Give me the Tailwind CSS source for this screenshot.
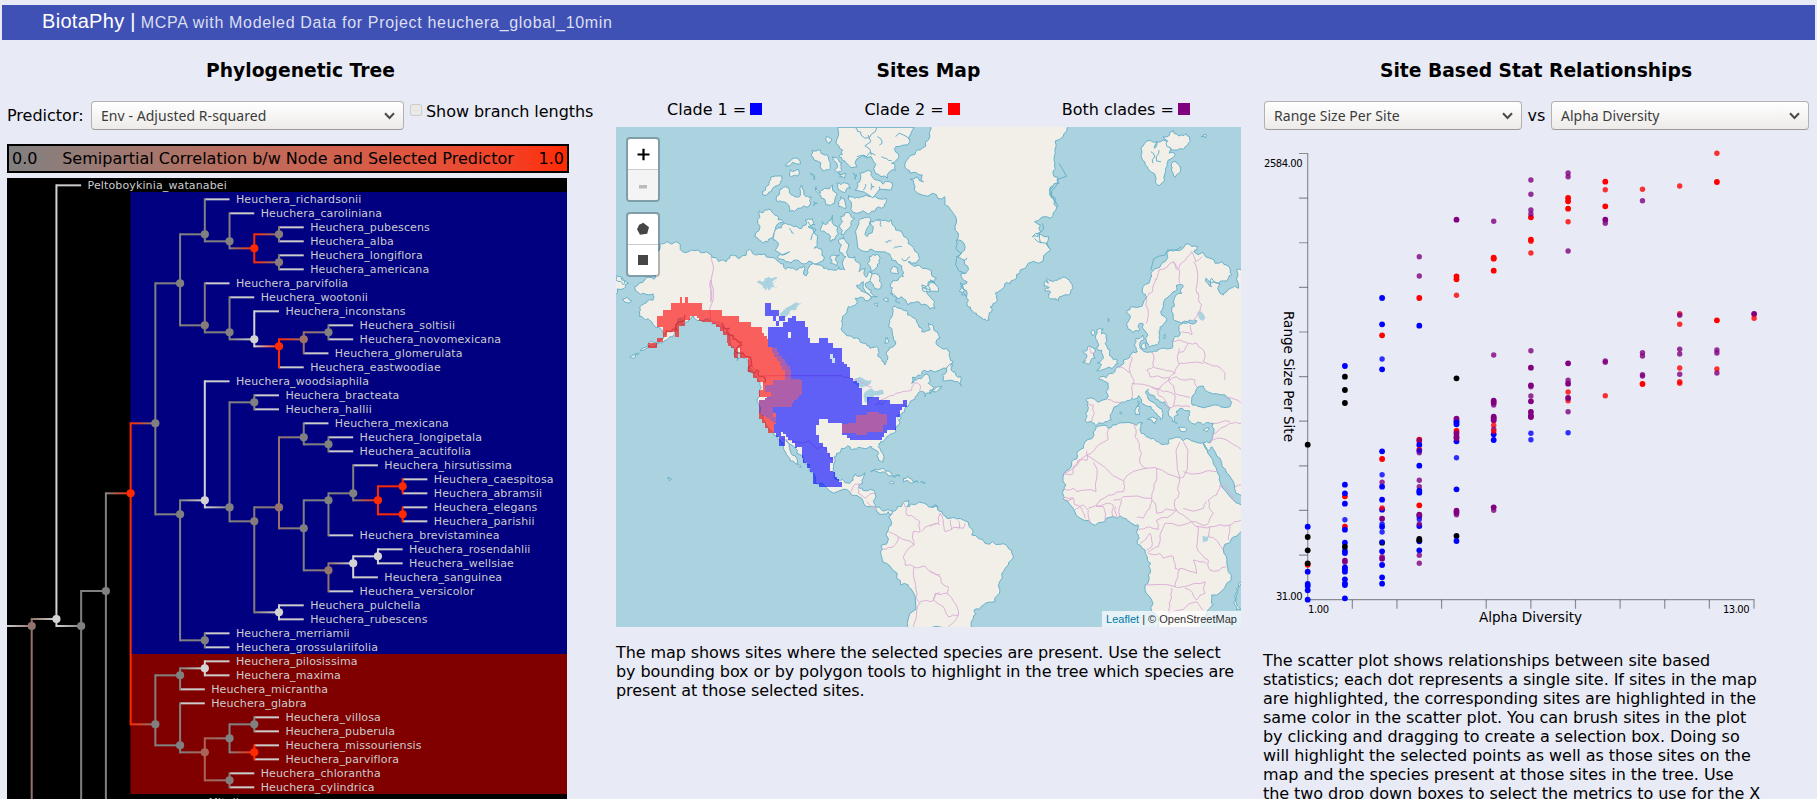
<!DOCTYPE html>
<html lang="en">
<head>
<meta charset="utf-8">
<title>BiotaPhy</title>
<script src="https://cdn.jsdelivr.net/npm/@tailwindcss/browser@4"></script>
</head>
<body class="h-[799px] w-[1817px] overflow-hidden bg-[#e8eaf6] pt-[5px] font-['DejaVu_Sans',sans-serif] text-[16px] leading-[19px] text-black">
<header class="mx-[2px] flex h-[35px] items-center whitespace-nowrap bg-[#3f51b5] pl-[40px] font-['Liberation_Sans',sans-serif]">
  <span class="text-[20px] leading-[24px] tracking-[0.3px] text-white -mt-[3px]">BiotaPhy |</span>
  <span class="ml-[5px] text-[16px] leading-[24px] tracking-[0.68px] text-[#dcdff0]">MCPA with Modeled Data for Project heuchera_global_10min</span>
</header>
<main class="flex h-[759px] items-start">
  <section class="w-[600px] pl-[7px]">
    <h3 class="mr-[-1px] pt-[20px] pr-[7px] text-center text-[18.72px] font-bold leading-[22px]">Phylogenetic Tree</h3>
    <div class="mt-[19px] flex h-[29px] items-start whitespace-nowrap">
      <span class="w-[84px] pt-[5px]">Predictor:</span>
      <div class="flex h-[29px] w-[313px] items-center justify-between rounded-[4px] border border-[#b4b2ae] border-b-[#9d9a95] bg-linear-to-b from-white to-[#edebe9] pr-[8px] pl-[9px] text-[14px] text-[#3c3c3c] font-['Noto_Sans',sans-serif]">
        <span class="tracking-[0.05px]">Env - Adjusted R-squared</span>
        <svg width="11" height="8" viewBox="0 0 11 8" fill="none" stroke="#4a4a4a" stroke-width="2"><path d="M1 1.2 5.5 6 10 1.2"/></svg>
      </div>
      <span class="ml-[6px] mt-[3px] h-[12px] w-[12px] rounded-[2px] border border-[#d0cecb] bg-[#ebe9e8]"></span>
      <span class="ml-[4px] mt-[1px] tracking-[-0.05px]">Show branch lengths</span>
    </div>
    <div class="mt-[14px] flex h-[29px] w-[562px] items-center justify-between whitespace-nowrap border-2 border-black bg-linear-to-r from-[#808080] to-[#ff2a00] px-[3px]">
      <span>0.0</span><span>Semipartial Correlation b/w Node and Selected Predictor</span><span>1.0</span>
    </div>
    <svg id="tree" class="mt-[5px] block" width="560" height="621" viewBox="7 178 560 621"></svg>
  </section>
  <section class="ml-[16px] w-[625px]">
    <h3 class="pt-[20px] text-center text-[18.72px] font-bold leading-[22px]">Sites Map</h3>
    <div class="mt-[18px] flex h-[27px] justify-around whitespace-nowrap">
      <span class="flex items-start">Clade 1 =<i class="mt-[3px] ml-[4px] h-[12px] w-[12px] bg-[#0000ff]"></i></span>
      <span class="flex items-start">Clade 2 =<i class="mt-[3px] ml-[4px] h-[12px] w-[12px] bg-[#ff0000]"></i></span>
      <span class="flex items-start">Both clades =<i class="mt-[3px] ml-[4px] h-[12px] w-[12px] bg-[#800080]"></i></span>
    </div>
    <div class="relative h-[500px] w-[625px] overflow-hidden bg-[#aad3df]">
      <svg id="map" class="block" width="625" height="500" viewBox="616 127 625 500"></svg>
      <div class="absolute top-[10px] left-[10px] flex h-[65px] w-[34px] flex-col overflow-hidden rounded-[4px] border-2 border-black/25 bg-white bg-clip-padding">
        <div class="flex h-[31px] items-center justify-center border-b border-[#ccc]"><svg width="13" height="13" viewBox="0 0 13 13" stroke="#000" stroke-width="2.2"><path d="M6.5 .8v11.4M.5 6.5h12"/></svg></div>
        <div class="flex grow items-center justify-center bg-[#f4f4f4] pt-[4px]"><svg width="8" height="4"><path fill="#bbb" d="M0 0h8v3.6H0z"/></svg></div>
      </div>
      <div class="absolute top-[85px] left-[10px] flex h-[65px] w-[34px] flex-col overflow-hidden rounded-[4px] border-2 border-black/25 bg-white bg-clip-padding">
        <div class="flex h-[31px] items-center justify-center border-b border-[#ccc]"><svg width="14" height="14" viewBox="0 0 14 14" fill="#464646"><path d="M7.3 .8 13 5.2 11.2 11.7 4 12.8 1 7.2 3.2 2.8z"/></svg></div>
        <div class="flex grow items-center justify-center"><span class="h-[10px] w-[10px] bg-[#464646]"></span></div>
      </div>
      <div class="absolute right-0 bottom-0 flex h-[16px] w-[139px] items-center justify-center whitespace-pre bg-white/70 font-['Liberation_Sans',sans-serif] text-[11px] text-[#333]"><span class="text-[#0078a8]">Leaflet</span> | © OpenStreetMap</div>
    </div>
    <p class="mt-[16px] whitespace-nowrap tracking-[-0.09px]">The map shows sites where the selected species are present. Use the select<br>by bounding box or by polygon tools to highlight in the tree which species are<br>present at those selected sites.</p>
  </section>
  <section class="ml-[22px] w-[546px]">
    <h3 class="pt-[20px] text-center text-[18.72px] font-bold leading-[22px]">Site Based Stat Relationships</h3>
    <div class="mt-[19px] flex h-[29px] items-center justify-between whitespace-nowrap pl-[1px]">
      <div class="flex h-[29px] w-[258px] items-center justify-between rounded-[4px] border border-[#b4b2ae] border-b-[#9d9a95] bg-linear-to-b from-white to-[#edebe9] pr-[8px] pl-[9px] text-[14px] text-[#3c3c3c] font-['Noto_Sans',sans-serif]">
        <span class="tracking-[0.05px]">Range Size Per Site</span>
        <svg width="11" height="8" viewBox="0 0 11 8" fill="none" stroke="#4a4a4a" stroke-width="2"><path d="M1 1.2 5.5 6 10 1.2"/></svg>
      </div>
      <span>vs</span>
      <div class="flex h-[29px] w-[258px] items-center justify-between rounded-[4px] border border-[#b4b2ae] border-b-[#9d9a95] bg-linear-to-b from-white to-[#edebe9] pr-[8px] pl-[9px] text-[14px] text-[#3c3c3c] font-['Noto_Sans',sans-serif]">
        <span>Alpha Diversity</span>
        <svg width="11" height="8" viewBox="0 0 11 8" fill="none" stroke="#4a4a4a" stroke-width="2"><path d="M1 1.2 5.5 6 10 1.2"/></svg>
      </div>
    </div>
    <svg id="plot" class="block" width="546" height="500" viewBox="1263 130 546 500"></svg>
    <p class="mt-[21px] whitespace-nowrap tracking-[-0.06px]">The scatter plot shows relationships between site based<br>statistics; each dot represents a single site. If sites in the map<br>are highlighted, the corresponding sites are highlighted in the<br>same color in the scatter plot. You can brush sites in the plot<br>by clicking and dragging to create a selection box. Doing so<br>will highlight the selected points as well as those sites on the<br>map and the species present at those sites in the tree. Use<br>the two drop down boxes to select the metrics to use for the X</p>
  </section>
</main>
<script>
/* ---------- phylogenetic tree ---------- */
(function () {
  const g = '#808080', h = '#857b7b', w = '#d3d3d3', r = '#ff2a00', b = '#93736e';
  const H = 'Heuchera_';
  const blue = [g,
    [g,
      [g, 'richardsonii', [g, 'caroliniana', [r, [h, 'pubescens', 'alba'], [h, 'longiflora', 'americana']]]],
      [h, 'parvifolia', [g, 'wootonii', [w, 'inconstans', [r, ['#9d7068', [g, 'soltisii', 'novomexicana'], 'glomerulata'], 'eastwoodiae']]]]],
    [g,
      [w, 'woodsiaphila', [g, [g, 'bracteata', 'hallii'],
        [h, [b, [g, 'mexicana', [g, 'longipetala', 'acutifolia']],
          [g, [g, [g, 'hirsutissima', [r, [r, 'caespitosa', 'abramsii'], [r, 'elegans', 'parishii']]], 'brevistaminea'],
            [b, [w, [w, 'rosendahlii', 'wellsiae'], 'sanguinea'], 'versicolor']]],
          [w, 'pulchella', 'rubescens']]]],
      [g, 'merriamii', 'grossulariifolia']]];
  const red = [g,
    [g, [w, 'pilosissima', 'maxima'], 'micrantha'],
    [g, 'glabra', ['#aa6358', [g, [g, 'villosa', 'puberula'], [r, 'missouriensis', 'parviflora']], [h, 'chlorantha', 'cylindrica']]]];
  const X0 = 31.7, DX = 24.73;
  let leaf = 1, lines = '', dots = '', texts = '', defs = '', gid = 0;
  const X = d => X0 + d * DX, Y = i => 185.33 + i * 14;
  function hline(x1, x2, y, c1, c2) {
    let fill = c1;
    if (c1 !== c2) { const id = 'g' + gid++; defs += `<linearGradient id="${id}"><stop stop-color="${c1}"/><stop offset="1" stop-color="${c2}"/></linearGradient>`; fill = `url(#${id})`; }
    lines += `<rect x="${x1}" y="${y - 1}" width="${x2 - x1}" height="2" fill="${fill}"/>`;
  }
  function vline(x, y1, y2, c) { lines += `<rect x="${x - 1}" y="${Math.min(y1, y2) - 1}" width="2" height="${Math.abs(y2 - y1) + 2}" fill="${c}"/>`; }
  function dot(x, y, c) { dots += `<circle cx="${x}" cy="${y}" r="4.1" fill="${c}"/>`; }
  function label(x, y, t) { texts += `<text x="${x + 6.4}" y="${y + 3.6}">${t}</text>`; }
  function walk(n, d) {
    if (typeof n === 'string') { const y = Y(leaf++); label(X(d), y, H + n); return { y, a: y, z: y, c: '#cccccc', leaf: 1 }; }
    const k = [walk(n[1], d + 1), walk(n[2], d + 1)];
    const a = k[0].a, z = k[1].z, y = (a + z) / 2;
    k.forEach(q => hline(X(d), X(d + 1), q.y, q.leaf ? '#cccccc' : n[0], q.c));
    vline(X(d), k[0].y, k[1].y, n[0]);
    dot(X(d), y, n[0]);
    return { y, a, z, c: n[0] };
  }
  const B = walk(blue, 5), R = walk(red, 5), ry = (B.a + R.z) / 2;
  hline(X(4), X(5), B.y, r, g); hline(X(4), X(5), R.y, r, g); vline(X(4), B.y, R.y, r); dot(X(4), ry, r);
  hline(X(3), X(4), ry, g, r); vline(X(3), ry, 820, g); dot(X(3), 591, g);
  hline(X(2), X(3), 591, g, g); vline(X(2), 591, 820, g); dot(X(2), 626, g);
  hline(X(1), X(2), 626, w, g); vline(X(1), 185.33, 626, w); dot(X(1), 619, w);
  hline(X(1), X(2), 185.33, '#ccc', '#ccc'); label(X(2), 185.33, 'Peltoboykinia_watanabei');
  hline(X(0), X(1), 619, b, w); vline(X(0), 619, 820, b); dot(X(0), 626, b);
  hline(7, X(0), 626, '#cccccc', b);
  label(202, 802.6, 'Mitella');
  document.getElementById('tree').innerHTML = `<defs>${defs}</defs><path d="M7 178h560v621H7z"/><path fill="navy" d="M130.4 192H567v462H130.4z"/><path fill="maroon" d="M130.4 654H567v140H130.4z"/>${lines}${dots}<g fill="#ccc" font-size="11" letter-spacing=".13" font-family="DejaVu Sans">${texts}</g>`;
})();

/* ---------- sites map ---------- */
(function () {
  const frames = { A: [610, 40, 2.45, 3], B: [610, 280, 3, 3], C: [930, 280, 3, 3] };
  let seed = 7; const rnd = () => (seed = (seed * 16807) % 2147483647) / 2147483647;
  function pts(s) {
    let f = frames.B; const out = [];
    s.trim().split(/\s+/).forEach(t => {
      if (frames[t]) { f = frames[t]; return; }
      const [x, y] = t.split(',').map(Number); out.push([x / f[2] + f[0], y / f[3] + f[1]]);
    });
    return out;
  }
  function rough(p, k, close) {
    for (let n = 0; n < 2; n++) {
      const o = [];
      p.forEach((a, i) => {
        o.push(a); if (!close && i === p.length - 1) return;
        const c = p[(i + 1) % p.length], dx = c[0] - a[0], dy = c[1] - a[1], L = Math.hypot(dx, dy);
        if (L > 2 && L < 60) { const j = (rnd() - .5) * k; o.push([(a[0] + c[0]) / 2 - dy * j, (a[1] + c[1]) / 2 + dx * j]); }
      });
      p = o;
    }
    return p;
  }
  const path = (p, close) => 'M' + p.map(q => q[0].toFixed(1) + ' ' + q[1].toFixed(1)).join('L') + (close ? 'Z' : '');
  const land = [
    `A 140,605 172,628 200,630 230,638 250,652 285,665 300,645 318,655 342,628 360,645 380,642 405,655 425,672 430,688 455,690 475,678 480,708 486,685 515,675 535,690 555,690 560,680 575,690 578,650 562,630 560,600 572,590 585,612 582,645 600,650 612,670 610,695 625,685 628,712 640,690 635,650 655,642 662,655 655,680 640,720 625,735 640,750 655,770 B 760,5 740,15 760,35 775,40 785,55 765,62 735,55 740,72 715,80 703,105 697,130 705,160 730,175 760,190 780,205 805,205 805,230 815,238 825,255 832,240 830,215 850,200 850,170 845,150 835,140 838,120 848,100 850,80 870,85 890,92 905,110 920,120 925,135 935,155 960,150 955,130 970,140 990,175 C 20,180 35,205 60,215 70,245 55,265 0,270 B 940,272 925,285 905,310 925,295 950,282 955,310 970,322 990,325 C 10,325 0,340 B 960,335 945,350 938,335 920,348 915,358 900,370 885,385 875,400 865,420 857,445 850,460 830,470 812,485 805,500 822,530 820,545 805,535 795,510 785,500 760,505 740,508 720,500 695,505 680,520 675,545 672,575 685,600 705,608 730,600 735,582 765,578 758,610 745,622 765,632 795,635 792,660 795,680 815,690 835,688 848,692 848,710 835,695 820,703 800,695 780,680 755,655 725,645 695,630 650,624 615,610 600,575 580,545 560,520 545,495 527,480 540,510 560,535 573,562 555,550 535,530 520,500 510,480 490,458 465,425 450,400 445,370 448,340 450,305 440,290 430,275 415,250 400,235 375,220 360,185 340,155 320,135 300,122 270,120 250,108 235,125 215,135 215,115 200,130 195,160 175,175 150,188 115,200 90,212 140,190 162,165 155,150 135,140 125,125 100,115 88,95 95,75 110,65 130,60 130,42 100,40 75,30 A 60,740 85,720 108,718 110,700 100,690 110,640 122,612`,
    `A 10,710 30,712 45,730 35,745 10,765`,
    `B 18,0 40,15 45,5 30,-12 18,-12`,
    `A 365,512 385,510 400,520 412,540 425,548 405,575 395,595 375,610 355,590 362,550`,
    `A 405,570 430,550 450,560 470,565 478,540 495,535 502,555 485,560 500,580 500,625 520,635 525,655 500,672 475,672 455,660 430,665 410,650 440,635 405,632 412,615 400,600`,
    `A 520,545 533,550 545,525 558,560 550,600 540,605 530,580 515,570`,
    `A 565,530 590,525 600,535 585,565 568,585 562,560`,
    `A 610,550 620,535 637,533 632,560 630,590 645,560 640,545 660,538 690,540 700,570 720,590 730,610 755,640 750,670 730,665 765,685 800,715 795,730 780,725 785,755 765,745 B 975,10 960,0 985,35 960,30 935,15 960,50 975,85 950,75 920,65 895,75 875,50 845,35 840,15 865,0 880,-10 A 715,690 690,660 680,640 650,635 625,635 605,600`,
    `A 585,465 600,475 620,470 650,470 677,475 672,500 650,513 620,512 590,508`,
    `A 558,262 555,300 570,330 560,350 580,370 605,380 620,345 640,350 650,400 680,415 700,390 690,370 708,350 700,320 735,305 745,262`,
    `A 612,400 640,395 645,415 655,420 685,425 688,450 600,450 605,430`,
    `A 430,440 445,465 462,472 464,445 470,435 480,470 493,470 490,495 460,505 440,515 425,485 410,485 415,455`,
    `A 505,440 515,460 525,445 545,435 550,490 530,495 518,475`,
    `A 373,455 390,425 405,408 422,408 418,430 395,455 380,468`,
    `A 495,330 515,330 525,345 538,365 540,385 520,390 500,360`,
    `A 545,350 560,360 567,380 565,395 550,390`, `A 555,430 575,428 590,445 575,458 560,450`, `A 565,470 575,480 578,505 560,500`,
    `A 440,365 460,355 467,372 430,378`, `A 442,390 462,388 460,408 445,410`, `A 490,398 500,405 500,420`, `A 530,290 542,295 538,310`, `A 560,398 578,400 575,415 563,412`, `A 595,400 605,405 600,418`, `A 500,485 508,490 500,497`, `A 540,650 562,645 555,678 540,670`, `A 692,682 705,685 705,702 692,700`,
    `B 780,-25 810,-5 812,25 795,28 785,10`, `B 820,60 835,55 835,65`, `B 792,72 803,70 803,80`, `B 825,175 832,172 832,190 824,190`,
    `A 785,255 780,300 760,330 740,345 722,375 735,400 765,405 768,425 735,418 745,450 790,460 820,470 835,510 845,560 850,600 870,620 848,650 875,655 878,690 860,700 875,725 860,740 873,770 C 90,8 105,30 95,45 115,60 110,70 130,95 145,108 160,118 178,120 185,95 190,70 200,55 195,40 225,10 250,0 A 990,720 1005,690 1050,670 1080,630 1075,590 1035,590 1055,575 1040,545 1080,535 1095,500 1080,470 1080,440 1100,430 1085,400 1090,370 1090,330 1110,290 1125,255`,
    `A 1310,310 1340,305 1335,325 1355,300 1370,340 1385,345 1365,370 1360,400 1345,438 1325,395 1310,365 1303,340`,
    `A 1355,290 1380,272 1400,285 1420,290 1415,315 1390,330 1365,320`, `A 1380,365 1398,385 1385,412 1375,390`, `A 1448,290 1462,285 1460,293`,
    `C 344,5 355,10 352,-5 370,5 385,-3 410,-5 420,5 430,25 415,45 385,62 355,50 362,38 345,32 358,22 342,18`,
    `A 1410,612 1440,620 1430,635 1470,655 1500,665 1520,690 1515,715 1490,730 1460,715 1475,740 C 845,-5 870,40 880,45 895,30 A 1520,745 1540,745 1535,690 1560,680 C 950,670 918,640 950,672 933,755 905,775 882,820 893,860 890,910 845,945 850,975 830,1000 820,1055 690,1055 675,1000 665,960 645,915 655,885 662,850 645,810 622,780 625,765 625,735 605,732 585,715 560,715 525,725 485,732 460,720 430,685 402,660 400,645 408,615 400,585 425,545 440,520 460,505 465,485 490,455 497,442 535,445 565,430 600,428 638,428 630,450 645,465 670,475 690,490 715,492 718,475 735,472 760,482 795,485 820,488 840,488 848,465 850,430 820,435 785,430 775,410 778,392 750,385 740,393 745,405 732,412 742,430 728,425 715,400 712,378 690,365 665,345 655,328 648,340 665,365 690,385 700,400 690,418 682,405 670,390 650,378 635,360 625,347 605,355 590,362 570,370 545,400 545,420 520,430 497,437 485,425 468,425 465,400 472,375 468,358 480,353 530,357 535,350 535,320 525,305 507,298 512,290 540,280 560,262 580,240 600,225 622,215 615,190 618,175 638,165 640,180 630,200 640,213 660,215 680,215 700,205 725,205 728,190 735,170 750,165 748,145 755,132 780,130 800,122 780,120 745,125 730,110 725,90 730,65 755,40 760,20 740,15 730,35 700,70 695,105 708,125 690,150 690,180 675,195 658,200 650,185 642,150 638,130 625,155 605,155 590,135 600,115 590,95 605,80 650,50 638,40 A 1305,760 1320,730 1325,700 1340,685 1360,665 1385,630`,
    `C 500,150 520,147 515,162 530,165 525,190 540,210 545,230 562,240 555,258 535,262 500,272 515,255 502,248 520,235 515,210 500,205 505,190 497,175`,
    `C 458,215 470,212 480,198 495,205 495,235 480,250 458,247 468,235`,
    `C 488,150 494,155 488,168`, `C 624,362 628,372 622,380`, `C 618,383 630,382 628,405 618,405`, `C 652,418 682,416 676,430`, `C 745,443 770,447 770,450 750,449`, `C 820,450 838,444 832,455`, `C 640,190 650,188 650,205 635,205`, `C 704,162 708,170 700,175`, `C 568,398 576,397 574,403`, `C 532,115 537,118 534,126`,
    `C 940,900 920,925 920,945 912,965 920,990 940,995`,
    `B 848,692 862,680 880,668 895,660 890,680 905,672 935,668 955,680 985,682 C 5,680 22,678 35,695 60,715 100,720 118,740 125,765 165,790 210,793 245,812 250,830 235,855 215,880 210,930 195,965 160,975 132,990 130,1015 105,1060 B 890,1060 900,1000 905,930 895,915 860,895 830,850 812,820 815,795 835,750 845,730`,
    `B 782,575 795,567 820,565 840,575 870,588 855,592 820,575`, `B 880,595 905,597 925,606 905,610 880,606`, `B 838,608 852,607 850,612`, `B 932,606 945,607 944,611`, `B 172,594 180,592 185,598 178,602`,
    `C 38,302 50,275 66,250 68,275 92,290 95,318 75,305`, `C 0,330 15,325 35,318 25,330 0,342`, `B 112,195 140,188 140,200`, `B 60,232 75,222 88,220 70,235`, `B 38,57 65,62 60,68 42,64`, `B 372,218 382,242 388,235`
  ];
  const water = [
    `C 787,375 790,345 805,320 820,318 832,335 850,342 885,345 905,368 900,380 880,382 850,375 810,380`,
    `C 820,488 836,512 845,500 870,535 890,580 912,610 918,640 945,655 945,680 910,660 870,605 862,575 840,528`
  ];
  const fjords = [
    `A 600,262 615,285 650,275 685,262`, `A 632,285 640,345`, `A 655,290 660,315`, `A 605,350 650,345`, `A 735,300 700,290`, `A 690,362 665,350`,
    `A 640,430 640,450`, `A 625,432 620,450`, `A 660,440 660,450`, `A 655,540 665,560`, `A 690,600 675,605`, `A 715,620 695,625`, `A 735,650 715,655`,
    `A 485,545 492,600`, `A 440,565 450,580`, `A 848,600 862,640 870,700`, `A 1100,370 1092,440 1098,500`, `A 1040,595 1075,625`, `A 1060,550 1055,610`, `A 1085,440 1090,490`,
    `A 1325,690 1360,645 1400,620`, `A 1330,370 1325,335`, `A 1345,330 1350,365`, `B 840,40 870,70`
  ];
  const lakes = [
    `C 816,770 840,765 835,780 820,790`, `C 803,96 815,95 826,110 818,123 805,112`,
    `A 358,730 375,725 388,710 410,712 398,725 410,745 395,740 390,752 383,738 370,750 376,738`, `B 510,100 525,88 545,75 575,70 558,90 540,92 530,108 512,108`, `B 440,4 470,10 500,2 480,15 468,32 460,18`,
    `B 728,308 750,290 785,300 780,312 745,318`, `B 763,365 765,335 785,325 820,330 822,342 795,345 778,355 772,368`, `B 797,373 835,358 820,368`,
    `B 860,408 868,400 864,420`
  ];
  const borders = [
    `A 247,650 247,785 B 302,0 302,118 330,130 360,165 390,195 420,245 440,285`, `B 460,287 695,287 720,295 760,310 785,320`, `B 795,375 835,350 865,338 890,335 905,330 915,308 930,315 930,335`,
    `B 512,475 555,487 597,482 622,508 640,500 660,535 675,540`, `B 720,640 735,612 748,610 745,640 765,655 795,640`, `B 770,665 800,690`,
    `B 882,670 890,705 915,715 930,725 930,755 910,755 912,795 865,770 835,755`, `B 935,755 960,735 990,735`, `B 865,770 850,800 820,808`, `B 912,795 880,830 885,855 910,860 945,858 990,885`, `B 912,860 918,930 930,970 920,990 910,1045`, `B 930,965 970,962 980,940 990,937`,
    `C 0,740 25,730 30,700`, `C 30,700 40,720 45,755 100,745 105,730`, `C 60,720 65,750`, `C 85,722 85,748`, `C 0,875 30,890 35,910 55,920 50,940 15,940 10,960 40,980 55,1010 85,1005 75,970 50,940`, `C 85,1005 55,1040`,
    `C 678,-5 668,35 650,50 655,100 648,130`, `C 678,0 A 1345,690 1380,665 1390,690 1410,660 1425,635 1435,665 1450,650`, `A 1380,665 1395,690 1395,730`, `A 1430,665 1440,710 1438,760 C 805,40 815,75 800,110 790,125`,
    `C 472,372 490,375 485,425`, `C 532,358 575,368`, `C 565,262 600,278 612,305 605,330 605,355`, `C 605,230 600,255 600,278`, `C 665,215 670,260 650,270 660,290 690,290 720,295`, `C 670,260 700,268 735,280 748,255 748,205`, `C 605,310 625,312 660,318 690,325 715,300 740,290 760,300 795,300 800,320`, `C 728,185 760,185 775,190 760,215 745,220`, `C 755,155 785,165 780,135`, `C 775,190 800,190 825,225 820,245 850,258 885,278 885,300`, `C 748,250 820,250`, `C 735,280 715,300 735,340 780,352`, `C 680,328 685,345 705,360 715,385 735,378 780,380`, `C 665,320 700,335 715,335 735,345 730,378`, `C 480,200 482,218 495,218`,
    `C 535,445 535,478 500,500 470,525 402,582`, `C 470,512 472,540 445,540 430,580 402,582`, `C 470,525 580,602 650,565 680,565 750,595 750,485`, `C 760,485 760,592 748,595 748,640 735,660 740,690`, `C 760,575 860,575`, `C 612,430 615,470 628,490 630,550 650,565`, `C 490,547 498,635 440,635 430,625 402,628`, `C 583,602 580,635 545,645 510,660 500,680`, `C 402,652 428,652`, `C 402,660 430,655 435,675 460,675 475,690 480,730`, `C 435,690 450,680 465,715`, `C 475,685 520,680 525,725`, `C 500,680 525,672 550,675 550,715`, `C 557,680 560,712`, `C 550,660 580,650 665,655 680,600 680,565`, `C 575,660 570,710`, `C 665,655 660,685 640,715 620,712`, `C 665,660 680,700 740,690 760,705 785,725 830,735 850,700 835,660 860,645`, `C 760,685 820,685 830,665`, `C 625,748 685,748 680,720 740,690`, `C 630,790 660,760 665,800 650,810`, `C 655,815 685,800 705,730 785,725 805,740 800,800 835,840 840,870 890,860`, `C 652,818 690,820 700,835 730,830 735,865 750,870`, `C 750,865 735,920 648,915`, `C 750,865 800,880 790,840 830,850`, `C 735,920 765,920 825,905 825,940 800,960 765,925`, `C 725,925 722,960 715,1000`, `C 715,1000 800,965 820,990`, `C 800,740 840,740 835,770 880,810`, `C 840,740 900,735 895,780`, `C 900,735 933,720`, `C 860,645 870,615 905,645 915,665`, `C 840,490 848,465 900,430 933,430`, `C 850,480 890,480 933,508`, `C 890,355 933,370`, `C 850,430 900,425`, `C 915,620 933,615`
  ];
  /* staircase outline for gridded site cells */
  function stairs(s) {
    const q = pts(s), u = 2.85, o = [];
    q.forEach((a, i) => {
      const c = q[(i + 1) % q.length], dx = c[0] - a[0], dy = c[1] - a[1];
      const n = Math.max(1, Math.round(Math.min(Math.abs(dx), Math.abs(dy)) / u));
      for (let k = 0; k < n; k++) {
        const x = a[0] + dx * k / n, y = a[1] + dy * k / n;
        o.push([Math.round(x), Math.round(y)], [Math.round(a[0] + dx * (k + 1) / n), Math.round(y)]);
      }
    });
    return path(o, true);
  }
  const red = [`183,70 210,70 210,52 216,52 216,70 225,70 225,52 233,52 233,70 275,70 275,90 335,90 335,108 387,108 387,125 423,125 423,142 445,142 455,160 470,178 475,200 485,207 510,250 525,270 540,290 540,300 520,330 490,350 448,360 448,330 460,305 440,295 430,275 415,265 413,235 400,235 390,205 385,235 373,230 373,205 355,190 350,165 330,140 305,125 275,122 260,108 240,108 240,120 225,125 225,138 208,140 208,172 193,172 195,155 180,155 172,172 160,170 160,142 142,140 142,108 160,105 160,90 183,88`,
    `115,190 140,190 140,203 115,203`, `142,175 158,175 158,187 142,187`, `447,390 490,400 497,432 492,458 484,458 465,430 447,405`];
  const blue = [`475,142 518,142 518,125 535,122 535,115 545,108 557,108 557,122 584,122 584,140 593,142 593,175 600,188 627,188 627,175 653,175 653,188 670,188 670,203 685,205 695,220 695,245 710,260 720,275 720,295 740,310 755,340 757,375 772,370 772,350 806,350 806,360 840,360 840,372 878,372 878,360 890,360 890,382 875,390 870,410 858,420 857,450 830,460 815,480 730,480 712,465 697,460 697,430 655,428 655,418 628,418 628,436 618,440 618,465 627,470 627,490 640,500 650,520 660,530 668,550 660,572 670,575 675,590 688,605 695,620 645,620 628,612 610,600 610,575 590,550 578,535 576,500 560,505 555,490 535,470 520,455 513,468 524,470 524,497 515,497 508,470 497,458 490,430 470,400 470,320 500,300 500,240 475,200`,
    `465,70 483,70 483,90 507,90 507,107 465,107`, `508,108 525,108 525,122 508,122`, `498,124 508,124 508,138 498,138`, `490,108 498,108 498,122 490,122`];
  const purple = [`465,315 490,315 490,300 525,298 525,270 485,205 492,205 540,270 542,298 568,300 575,325 575,345 560,360 545,380 490,385 490,410 497,430 480,415 455,400 447,385 447,360 482,345 482,335 465,335`,
    `697,432 715,430 738,420 738,405 770,397 806,397 806,403 832,405 832,435 820,440 820,455 770,464 738,460 712,458 697,455`];
  const shore = 'stroke="#68b1c9" stroke-width="1" stroke-linejoin="round"';
  let s = `<g fill="#f2efe9" ${shore}>` + land.map(l => `<path d="${path(rough(pts(l), .6, true), true)}"/>`).join('') + '</g>';
  s += `<g fill="#aad3df" ${shore}>` + water.map(l => `<path d="${path(rough(pts(l), .3, true), true)}"/>`).join('') + '</g>';
  s += `<g fill="none" ${shore}>` + fjords.map(l => `<path d="${path(rough(pts(l), .9))}"/>`).join('') + '</g>';
  s += '<g fill="#aad3df">' + lakes.map(l => `<path d="${path(rough(pts(l), .4, true), true)}"/>`).join('') + '</g>';
  s += '<g fill="none" stroke="#d9a9d5" stroke-width="0.9">' + borders.map(l => `<path d="${path(rough(pts(l), .3))}"/>`).join('') + '</g>';
  const grp = (c, a) => `<path fill="${c}" d="${a.map(stairs).join('')}"/>`;
  s += '<g opacity=".6" shape-rendering="crispEdges">' + grp('#0000ff', blue) + grp('#ff0000', red) + grp('#800080', purple) + '</g>';
  s += `<g fill="#c9e2ea"><path d="M830 354h3v4h2v5h-3v-4h-2z"/><path fill="#f2efe9" d="M788 332h3v6h-3z"/></g>`;
  s += `<path fill="none" stroke="#c02030" stroke-opacity=".55" stroke-width="1.3" d="${path(rough(pts('335,128 360,145 358,165 385,185 395,195 385,220 410,230 415,262 440,270 450,290 460,290 460,308'), .9))} ${path(rough(pts('225,105 208,125 200,150 165,165'), .9))}"/>`;
  document.getElementById('map').innerHTML = s;
})();

/* ---------- scatter plot ---------- */
(function () {
  const cols = [
    'k464 b710 k741 k781 r824 k820 b845 b882 b888 b901 b929',
    'b228 k260 k300 k339 b584 r619 b610 b641 B689 r710 b719 b758 b789 b783 k770 P817 p812 b832 b838 b845 b868 b880 b885 b925',
    'b24 b103 r136 B207 b238 b484 r507 B554 P577 b590 b629 b659 R654 p686 B702 b710 B726 k758 B756 b784 P800 p806 b825 b862 b881',
    'P-100 P-42 r24 b107 P455 r449 P451 b465 P488 r480 B482 b527 P571 P590 b602 b608 r646 p674 p678 B688 b708 P702 b754 k747 k751 b781 P796 P820',
    'p-211 r-41 r-32 R16 k265 p386 p392 b397 b403 r423 p430 b454 p440 p445 B503 b598 p662 p668 P674 k738 b753',
    'P-206 r-97 r-94 r-58 P195 p332 p338 P345 p380 p385 p391 R406 P418 b433 R424 b450 p652 P661',
    'P-330 P-287 P-240 r-218 P-228 r-151 R-146 R-111 P182 p233 p286 P290 P318 p334 p366 p377 p381 B430 B449',
    'P-351 P-340 r-276 r-266 r-244 R-205 P-117 p220 P271 p281 R306 R332 p324 P365 B428',
    'r-325 R-301 r-251 p-211 P-200 P213 P217 R317',
    'R-302 P-268 P188 P198 P254 P258 r282',
    'R-312 R71 P76 R103 P178 P192 R234 P253 R275 R280',
    'r-324 R-410 r91 P180 P189 R237 P249',
    'p72 R85'];
  const fill = { k: '#000', b: '#00f', r: '#f00', p: '#800080' };
  let s = '<g stroke="#000" stroke-opacity=".4" stroke-width="1.2">';
  s += '<path fill="none" d="M1299 153.5h8.7v446.2h446.3v9"/>';
  for (let i = 1; i < 10; i++) s += `<path d="M1299 ${153.5 + i * 44.62}h8.7M${1307.7 + i * 44.63} 599.7v9"/>`;
  s += '</g>';
  cols.forEach((c, i) => c.split(' ').forEach(t => {
    const k = t[0], solid = k === k.toLowerCase();
    s += `<circle cx="${(1307.7 + i * 37.2).toFixed(1)}" cy="${(290 + (+t.slice(1)) / 3).toFixed(1)}" r="${solid ? 2.9 : 2.7}" fill="${fill[k.toLowerCase()]}" opacity="${solid ? 1 : .8}"/>`;
  }));
  s += `<g font-family="DejaVu Sans" font-size="10"><text x="1264" y="167" textLength="38.5">2584.00</text><text x="1276" y="599.6" textLength="26.5">31.00</text><text x="1308" y="613" textLength="21">1.00</text><text x="1723" y="613" textLength="26.5">13.00</text></g>`;
  s += `<g font-family="DejaVu Sans" font-size="13.6"><text x="1479" y="622" textLength="103">Alpha Diversity</text><text transform="translate(1283.5 311) rotate(90)" textLength="131">Range Size Per Site</text></g>`;
  document.getElementById('plot').innerHTML = s;
})();
</script>
</body>
</html>
